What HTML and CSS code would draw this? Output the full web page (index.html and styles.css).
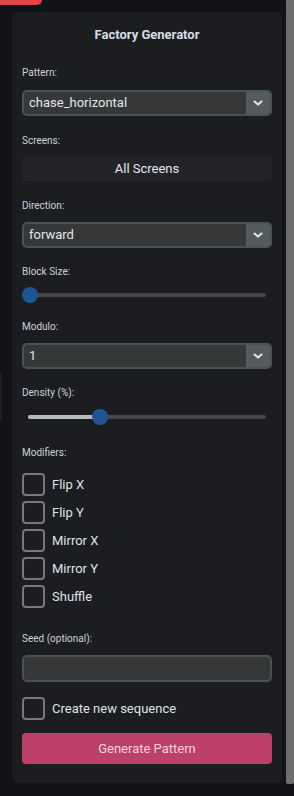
FILE: index.html
```html
<!DOCTYPE html>
<html lang="en">
<head>
<meta charset="utf-8">
<title>Factory Generator</title>
<link rel="stylesheet" href="styles.css">
</head>
<body>
<div class="page">
  <div class="content">
    <div class="red-tab"></div>
    <div class="edge-strip"></div>
    <section class="panel">
      <h2 class="title">Factory Generator</h2>

      <div class="field field-first">
        <div class="label label-wide">Pattern:</div>
        <div class="select">
          <span class="select-value">chase_horizontal</span>
          <span class="select-arrow"><svg width="10" height="6" viewBox="0 0 10 6"><path d="M1.5 1.5 L5 4.5 L8.5 1.5" fill="none" stroke="#e4e6e8" stroke-width="2" stroke-linecap="round" stroke-linejoin="round"/></svg></span>
        </div>
      </div>

      <div class="field field-19">
        <div class="label label-narrow">Screens:</div>
        <div class="screens">All Screens</div>
      </div>

      <div class="field field-19">
        <div class="label">Direction:</div>
        <div class="select">
          <span class="select-value">forward</span>
          <span class="select-arrow"><svg width="10" height="6" viewBox="0 0 10 6"><path d="M1.5 1.5 L5 4.5 L8.5 1.5" fill="none" stroke="#e4e6e8" stroke-width="2" stroke-linecap="round" stroke-linejoin="round"/></svg></span>
        </div>
      </div>

      <div class="field">
        <div class="label label-narrow">Block Size:</div>
        <div class="slider slider-block">
          <div class="track"></div>
          <div class="thumb" style="left: 0px"></div>
        </div>
      </div>

      <div class="field">
        <div class="label">Modulo:</div>
        <div class="select">
          <span class="select-value">1</span>
          <span class="select-arrow"><svg width="10" height="6" viewBox="0 0 10 6"><path d="M1.5 1.5 L5 4.5 L8.5 1.5" fill="none" stroke="#e4e6e8" stroke-width="2" stroke-linecap="round" stroke-linejoin="round"/></svg></span>
        </div>
      </div>

      <div class="field">
        <div class="label">Density (%):</div>
        <div class="slider slider-density">
          <div class="track"><div class="fill" style="width: 72px"></div></div>
          <div class="thumb" style="left: 64px"></div>
        </div>
      </div>

      <div class="field field-22">
        <div class="label label-mods">Modifiers:</div>
        <div class="checks">
          <label class="check"><span class="box"></span><span class="check-text">Flip X</span></label>
          <label class="check"><span class="box"></span><span class="check-text">Flip Y</span></label>
          <label class="check"><span class="box"></span><span class="check-text">Mirror X</span></label>
          <label class="check"><span class="box"></span><span class="check-text">Mirror Y</span></label>
          <label class="check"><span class="box"></span><span class="check-text">Shuffle</span></label>
        </div>
      </div>

      <div class="field field-25">
        <div class="label">Seed (optional):</div>
        <div class="input"></div>
      </div>

      <label class="check check-seq"><span class="box"></span><span class="check-text">Create new sequence</span></label>

      <button class="generate">Generate Pattern</button>
    </section>
  </div>
  <div class="scrollbar"><div class="scroll-thumb"></div></div>
</div>
</body>
</html>
```

FILE: styles.css
```css
* { box-sizing: border-box; }

html, body {
  margin: 0;
  padding: 0;
  background: #131317;
  font-family: Roboto, "Liberation Sans", Arial, sans-serif;
  color: #dfe3e8;
}

.page {
  display: flex;
  width: 294px;
  height: 796px;
  overflow: hidden;
}

.content {
  position: relative;
  flex: 1;
  min-width: 0;
}

.red-tab {
  width: 42px;
  height: 5px;
  background: #e4454c;
  border-bottom-right-radius: 5px;
}

.edge-strip {
  position: absolute;
  left: 0;
  top: 373px;
  width: 2px;
  height: 48px;
  background: #202024;
}

.panel {
  margin: 7px 4px 0 12px;
  padding: 15px 10px 19px;
  background: #1c1d21;
  border-radius: 6px;
  display: flex;
  flex-direction: column;
}

.title {
  margin: 0;
  font-size: 13px;
  line-height: 16px;
  font-weight: 700;
  text-align: center;
  color: #d6dde4;
}

.field { margin-top: 18px; }
.field-first { margin-top: 24px; }
.field-19 { margin-top: 19px; }
.field-22 { margin-top: 22px; }
.field-25 { margin-top: 25px; }

.label {
  font-size: 10px;
  line-height: 12px;
  color: #cbd3db;
  margin-bottom: 10px;
}
.label-wide { margin-bottom: 11px; }
.label-narrow { margin-bottom: 9px; }
.label-mods { margin-bottom: 14px; }

.select {
  display: flex;
  height: 26px;
  border: 2px solid #4b5254;
  border-radius: 5px;
  background: #353738;
  overflow: hidden;
}

.select-value {
  flex: 1;
  padding-left: 5px;
  font-size: 13px;
  line-height: 22px;
  color: #e2e6ea;
}

.select-arrow {
  width: 24px;
  background: #545b5d;
  display: flex;
  align-items: center;
  justify-content: center;
}

.screens {
  height: 25px;
  background: #23242a;
  border-radius: 4px;
  font-size: 13px;
  line-height: 25px;
  text-align: center;
  color: #e2e6ea;
}

.slider {
  position: relative;
  height: 16px;
  margin-right: 6px;
  display: flex;
  align-items: center;
}
.slider-density { margin-left: 6px; }

.track {
  flex: 1;
  height: 4px;
  border-radius: 2px;
  background: #46484c;
  overflow: hidden;
}

.fill {
  height: 100%;
  background: #b6babd;
}

.thumb {
  position: absolute;
  top: 0;
  width: 16px;
  height: 16px;
  border-radius: 50%;
  background: #1f5596;
}

.checks {
  display: flex;
  flex-direction: column;
  gap: 5px;
}

.check {
  display: flex;
  align-items: center;
  gap: 7px;
  height: 23px;
}

.box {
  width: 23px;
  height: 23px;
  border: 2px solid #76797c;
  border-radius: 4px;
  flex: none;
}

.check-text {
  font-size: 13px;
  color: #dfe3e8;
}

.input {
  height: 27px;
  border: 2px solid #4b5052;
  border-radius: 5px;
  background: #353738;
}

.check-seq { margin-top: 15px; }

.generate {
  margin-top: 13px;
  height: 31px;
  border: none;
  border-radius: 4px;
  background: #bd4068;
  color: #f2d5df;
  font-family: Roboto, "Liberation Sans", Arial, sans-serif;
  font-size: 13px;
  padding: 0;
}

.scrollbar {
  width: 8px;
  flex: none;
}

.scroll-thumb {
  height: 784px;
  background: #6d6d6d;
  border-bottom-left-radius: 2px;
  border-bottom-right-radius: 2px;
}
```
